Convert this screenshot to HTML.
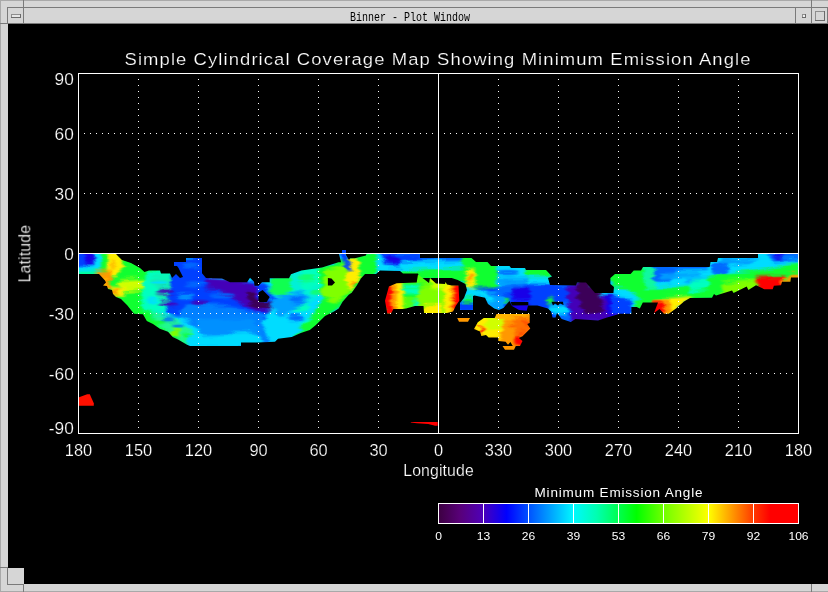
<!DOCTYPE html>
<html><head><meta charset="utf-8"><title>Binner - Plot Window</title>
<style>
html,body{margin:0;padding:0;background:#000;width:828px;height:592px;overflow:hidden}
svg{position:absolute;left:0;top:0;display:block}
text{font-family:"Liberation Sans",sans-serif;fill:#fff}
.hv{stroke:#000;stroke-width:0.2px}
.tt{font-family:"Liberation Mono",monospace;fill:#000}
</style></head><body>
<svg width="828" height="592" viewBox="0 0 828 592">
<rect x="0" y="0" width="828" height="592" fill="#000"/>
<g shape-rendering="crispEdges">
<rect x="0" y="0" width="828" height="24" fill="#d6d6d6"/>
<rect x="0" y="0" width="8" height="592" fill="#d6d6d6"/>
<rect x="0" y="584" width="828" height="8" fill="#d6d6d6"/>
<rect x="0" y="568" width="24" height="24" fill="#d6d6d6"/>
<rect x="0" y="0" width="828" height="1" fill="#a9a9a9"/>
<rect x="0" y="0" width="1" height="592" fill="#a9a9a9"/>
<rect x="0" y="591" width="828" height="1" fill="#a9a9a9"/>
<rect x="7" y="7" width="821" height="1" fill="#7a7a7a"/>
<rect x="0" y="23" width="828" height="1" fill="#7a7a7a"/>
<rect x="7" y="7" width="1" height="17" fill="#7a7a7a"/>
<rect x="23" y="0" width="1" height="24" fill="#7a7a7a"/>
<rect x="795" y="8" width="1" height="15" fill="#7a7a7a"/>
<rect x="811" y="0" width="1" height="24" fill="#7a7a7a"/>
<rect x="827" y="8" width="1" height="15" fill="#7a7a7a"/>
<rect x="8" y="24" width="820" height="560" fill="#000"/>
<rect x="24" y="568" width="804" height="16" fill="#000"/>
<rect x="8" y="568" width="16" height="16" fill="#d6d6d6"/>
<rect x="0" y="567" width="8" height="1" fill="#7a7a7a"/>
<rect x="7" y="568" width="1" height="17" fill="#7a7a7a"/>
<rect x="7" y="584" width="17" height="1" fill="#7a7a7a"/>
<rect x="23" y="584" width="1" height="8" fill="#7a7a7a"/>
<rect x="811" y="584" width="1" height="8" fill="#7a7a7a"/>
<rect x="11" y="14" width="10" height="4" fill="#e6e6e6"/>
<rect x="11" y="14" width="10" height="1" fill="#8e8e8e"/>
<rect x="11" y="14" width="1" height="4" fill="#8e8e8e"/>
<rect x="11" y="17" width="10" height="1" fill="#6a6a6a"/>
<rect x="20" y="14" width="1" height="4" fill="#6a6a6a"/>
<rect x="802" y="14" width="4" height="4" fill="#f0f0f0"/>
<rect x="802" y="14" width="4" height="1" fill="#8e8e8e"/>
<rect x="802" y="14" width="1" height="4" fill="#8e8e8e"/>
<rect x="802" y="17" width="4" height="1" fill="#6a6a6a"/>
<rect x="805" y="14" width="1" height="4" fill="#6a6a6a"/>
<rect x="815" y="11" width="10" height="10" fill="#d6d6d6"/>
<rect x="815" y="11" width="10" height="1" fill="#8e8e8e"/>
<rect x="815" y="11" width="1" height="10" fill="#8e8e8e"/>
<rect x="815" y="20" width="10" height="1" fill="#6a6a6a"/>
<rect x="824" y="11" width="1" height="10" fill="#6a6a6a"/>
</g>
<g opacity="0.999"><text class="tt" x="350" y="21" font-size="10" textLength="120" lengthAdjust="spacing" transform="translate(0,21) scale(1,1.3) translate(0,-21)">Binner - Plot Window</text></g>
<defs>
<clipPath id="c_main">
<polygon points="79,254 116,254 122,260 131,263 140,268 144.5,272 149,270.5 160,270.5 161,273.5 170,273.5 172,278 176,274 180,278 183,277 181,273 178.5,268 177,266 174,266 174,262 186,262 186,258 202,258 202,273.3 206,278 222,278.4 230,282.3 247,282.3 250,277.7 254,281.8 254.5,285.8 258.5,285.8 262,282.3 269.7,282.3 269.7,278.2 289,278.2 291,274.2 301.4,270.4 322,267.4 338.5,262.2 341,262.2 339,254 342,254 342,250 346,250 346,255 349,260 350.2,258.2 354.8,258.2 366,255.6 366.4,254 420,254 420,258 471.5,258 476,262 487.5,262 491,266 509.5,266 511,268 525,268 526,270 546,270 552,276.5 548,278 550,285 576,285.5 577,282.6 586,282.6 595,293 613.4,293 614,287 610.4,284 610.4,278 615,274 630.6,274 633.7,270.4 641,270.4 643,267 709.7,267 710.5,262 717,262 718,258 758,258 758,254 799,254 799,277.5 791,277.5 790.4,281.7 782,281.7 781,285.2 773.9,285.8 772.7,289.3 764.4,289.3 756,285.2 748.4,290 746.7,286.4 733.6,293 732,290.5 716,295.5 714,294 712,297.8 690,298 684,301.6 676,308.4 668.7,313.8 664,313.8 659.5,309 654,313 658,302.4 642.8,302.4 639.8,308.4 636.7,307 631.4,307 631.4,313.8 620,313.8 607,317.6 598,320.6 575.4,319 570.8,322 561.7,319 557,313 555.6,317.6 552.6,317.6 551,311.5 548,308.4 537.4,305.4 528,305.4 526.7,310.7 519,310 512,306 509.5,301 503.4,308 498.9,310 494.3,308.4 488,303.9 485,297.8 474.5,295.5 473,296 473,310 460,310 460,303 464,298 467,290 465.4,284 457.8,280 451.7,278 419.8,278 418,273.5 403,273.5 400,271 380,270.4 376,273.9 365,273.9 360.9,278.5 356.8,285.6 351.7,292.7 348.7,294.7 342.6,301.8 338.7,308.4 334,311.5 325,316 315.9,325 309.8,330 300.8,333 291.7,337 278,338.7 275,341.7 258,342.5 241,342.5 241,346 190,346 187,344.8 178,339.4 172.7,337 168,331.8 159.8,328.8 153,324 146.8,321 143,314.3 134,313.8 127,305 121,299 116,297 113,294 112,290 108,289 107,286 103,285.6 106,282.5 105,280.5 99,274 79,274"/>
</clipPath>
<clipPath id="c_mid">
<polygon points="385,300.8 388.9,286.4 396.5,283.3 416.7,282.6 418,274.5 429,283 430,278 436,283.5 445,284 445.5,282 447,284.5 451.7,285.6 458.5,285.6 459.3,300.8 456,305.4 453,311.5 447,313 424,313 423.5,306 415,306 406,308.4 402.5,309 393.4,309 391,313.8 387.3,313.8"/>
</clipPath>
<clipPath id="c_orange">
<polygon points="496.5,314 529.7,314 529.7,323 527.3,324 530.3,328.4 522.5,336.2 518.8,338 522.5,341 520,346 512.8,346 510.4,342 508,344.7 505.6,341.7 498.3,341 498.3,337.4 488.6,337.4 486,335 481.4,336 480,331.4 474,329 477.8,322.3 483.8,318 494.7,318"/>
<polygon points="502.5,346 515.8,346 514,349.8 505,349.8"/>
<polygon points="457.2,318 470,318 468,321.7 459,321.7"/>
</clipPath>
<filter id="bl" x="-5%" y="-20%" width="110%" height="140%" color-interpolation-filters="sRGB"><feGaussianBlur stdDeviation="1.4" result="b"/><feTurbulence type="fractalNoise" baseFrequency="0.035 0.22" numOctaves="2" seed="7" result="n"/><feDisplacementMap in="b" in2="n" scale="9" xChannelSelector="R" yChannelSelector="G"/></filter>
</defs>
<g clip-path="url(#c_main)"><g filter="url(#bl)">
<rect x="60" y="240" width="760" height="130" fill="#00c8ff"/>
<rect x="70" y="250" width="31" height="26" fill="#0040ff"/>
<polygon points="84,250 95,250 95,265 86,266" fill="#1800e8"/>
<rect x="70" y="266" width="31" height="10" fill="#00dcff"/>
<rect x="94" y="250" width="8" height="26" fill="#00dcff"/>
<rect x="70" y="270.5" width="34" height="7.5" fill="#00ffa0"/>
<rect x="101" y="250" width="10" height="30" fill="#10ff30"/>
<polygon points="110,250 150,262 180,270 178,300 140,318 120,308 104,290" fill="#10ff30"/>
<polygon points="108,250 119,250 125,262 117,277 106,276" fill="#ffee00"/>
<ellipse cx="113" cy="265" rx="2.5" ry="5" fill="#ffc000"/>
<polygon points="96,272 112,271 110,289 100,289" fill="#ff9800"/>
<polygon points="100,278 106,276 106,288 101,288" fill="#ffb800"/>
<polygon points="118,281 158,279 158,287 122,291" fill="#d0ff00"/>
<polygon points="109,287 124,287 124,296 112,296" fill="#ffee00"/>
<ellipse cx="115" cy="292" rx="4" ry="2.5" fill="#ff9800"/>
<polygon points="147,270 175,272 176,300 165,332 144,316 141,296" fill="#00ffc0"/>
<polygon points="150,276 178,276 175,300 160,300" fill="#10f0b0"/>
<ellipse cx="160" cy="283" rx="8" ry="3" fill="#00dcff"/>
<ellipse cx="152" cy="300" rx="6" ry="2.5" fill="#00dcff"/>
<polygon points="170,292 172,258 205,255 210,278 262,282 300,300 300,320 260,350 190,350 176,332 166,312" fill="#0040ff"/>
<polygon points="185,304 230,306 262,314 270,345 190,348 175,325" fill="#0080ff"/>
<polygon points="206,277 243,281 254,285 259,292 258,302 267,302 275,303 280,309 272,313 255,311 240,303 222,293 206,284" fill="#4400b8"/>
<polygon points="246,292 256,294 256,300 268,301 275,305 270,309 256,308 248,302" fill="#3c0058"/>
<ellipse cx="166" cy="292" rx="9" ry="2.5" fill="#4400b8"/>
<ellipse cx="168" cy="304" rx="9" ry="2.5" fill="#4400b8"/>
<ellipse cx="160" cy="316" rx="6" ry="2" fill="#1800e8"/>
<ellipse cx="200" cy="303" rx="9" ry="2.5" fill="#4400b8"/>
<ellipse cx="192" cy="266" rx="8" ry="3" fill="#0068ff"/>
<ellipse cx="196" cy="284" rx="10" ry="2.5" fill="#0068ff"/>
<ellipse cx="222" cy="296" rx="12" ry="2.5" fill="#0068ff"/>
<ellipse cx="186" cy="296" rx="8" ry="2" fill="#00a0ff"/>
<ellipse cx="212" cy="288" rx="8" ry="2" fill="#4400b8"/>
<polygon points="140,310 150,312 172,326 190,338 192,348 140,330" fill="#10ff30"/>
<ellipse cx="175" cy="333" rx="4" ry="4" fill="#80ff00"/>
<polygon points="150,316 185,330 200,346 215,346 190,322 165,312" fill="#00dcff"/>
<polygon points="152,314 172,316 192,332 194,346 180,342 160,328" fill="#20f890"/>
<ellipse cx="175" cy="333" rx="4" ry="4" fill="#80ff00"/>
<ellipse cx="168" cy="319" rx="7" ry="2" fill="#0068ff"/>
<ellipse cx="178" cy="326" rx="6" ry="2" fill="#0068ff"/>
<ellipse cx="160" cy="322" rx="5" ry="2" fill="#10ff30"/>
<ellipse cx="186" cy="336" rx="5" ry="2.5" fill="#10ff30"/>
<polygon points="196,320 250,318 262,330 250,336 200,334" fill="#0090ff"/>
<polygon points="186,336 246,333 262,336 262,348 186,348" fill="#00dcff"/>
<polygon points="262,282 300,268 330,262 330,300 300,336 270,344 262,320 280,300" fill="#00dcff"/>
<ellipse cx="275" cy="286" rx="5" ry="7" fill="#10ff30"/>
<polygon points="283,276 322,266 326,290 300,310 284,300" fill="#00f0d8"/>
<polygon points="300,268 324,266 322,284 304,290" fill="#00ffc0"/>
<polygon points="270,278 290,276 292,290 282,296 272,292" fill="#10ff50"/>
<ellipse cx="306" cy="279" rx="10" ry="3" fill="#10ff70"/>
<ellipse cx="318" cy="292" rx="8" ry="3" fill="#10ff70"/>
<ellipse cx="298" cy="296" rx="8" ry="2" fill="#0068ff"/>
<ellipse cx="300" cy="308" rx="10" ry="4" fill="#00ffc0"/>
<ellipse cx="312" cy="322" rx="9" ry="4" fill="#00ffc0"/>
<polygon points="268,300 300,290 310,300 280,318" fill="#00a0ff"/>
<ellipse cx="297" cy="300" rx="8" ry="3" fill="#0068ff"/>
<ellipse cx="295" cy="318" rx="8" ry="3" fill="#0068ff"/>
<polygon points="318,268 340,260 352,256 380,252 380,274 350,296 330,318 305,338 290,342 306,324 323,300" fill="#10ff30"/>
<polygon points="325,270 350,262 352,290 335,304 322,296" fill="#80ff00"/>
<polygon points="349,258 358,256 360,276 352,292 346,280" fill="#ffee00"/>
<ellipse cx="354" cy="283" rx="3" ry="3" fill="#ff9800"/>
<polygon points="339,253 341.5,249 347,249 348,258 352,271 347,271 344,262" fill="#0040ff"/>
<polygon points="358,252 380,252 380,274 366,276" fill="#10ff30"/>
<rect x="376" y="250" width="94" height="30" fill="#00dcff"/>
<polygon points="380,252 424,252 424,262 410,268 384,266" fill="#0040ff"/>
<ellipse cx="392" cy="260" rx="8" ry="5" fill="#1800e8"/>
<polygon points="420,252 465,252 465,263 420,265" fill="#0068ff"/>
<polygon points="400,269 470,264 470,282 420,280 400,276" fill="#10ff30"/>
<polygon points="400,262 462,261 462,268 400,270" fill="#00dcff"/>
<polygon points="462,254 478,254 496,262 499,288 474,294 462,282" fill="#10ff30"/>
<polygon points="464,270 473,268 476,286 468,290" fill="#ffee00"/>
<ellipse cx="470" cy="279" rx="2" ry="3.5" fill="#ff9800"/>
<polygon points="498,264 525,266 530,285 496,288" fill="#00dcff"/>
<ellipse cx="508" cy="273" rx="12" ry="2.5" fill="#0068ff"/>
<polygon points="496,278 530,278 530,284 500,284" fill="#00a0ff"/>
<polygon points="474,288 530,284 530,312 500,312 486,304" fill="#0040ff"/>
<polygon points="474,292 500,292 506,300 504,312 486,306" fill="#00a0ff"/>
<ellipse cx="489" cy="300" rx="4" ry="3" fill="#00dcff"/>
<ellipse cx="506" cy="301" rx="2" ry="3" fill="#10ff30"/>
<polygon points="474,290 488,291 488,298 474,297" fill="#00dcff"/>
<polygon points="494,286 530,282 530,292 498,296" fill="#0068ff"/>
<polygon points="466,288 474,288 474,298 464,298" fill="#00dcff"/>
<ellipse cx="468" cy="300" rx="5" ry="2.5" fill="#10ff30"/>
<rect x="458" y="302" width="17" height="10" fill="#0040ff"/>
<polygon points="526,268 548,268 554,278 528,282" fill="#10ff30"/>
<polygon points="528,276 552,276 552,288 528,290" fill="#00dcff"/>
<polygon points="524,284 580,284 580,324 540,324 524,312" fill="#0040ff"/>
<polygon points="512,288 530,288 530,299 512,300" fill="#1800e8"/>
<polygon points="508,304 530,304 530,314 508,314" fill="#1800e8"/>
<ellipse cx="550" cy="301" rx="3.5" ry="3.5" fill="#10ff30"/>
<polygon points="548,304 566,300 572,324 552,320" fill="#0068ff"/>
<polygon points="549,305.5 568,305.5 566,314 551,314" fill="#00dcff"/>
<polygon points="566,286 586,282 600,296 624,298 624,322 572,324" fill="#4400b8"/>
<polygon points="578,281 589,281 600,294 604,312 584,312 577,296" fill="#3c0058"/>
<polygon points="606,296 618,294 620,316 608,318" fill="#1800e8"/>
<polygon points="608,272 648,264 652,296 630,300 612,290" fill="#10ff30"/>
<polygon points="643,266 654,266 654,290 646,292" fill="#00f0c0"/>
<polygon points="612,288 628,290 640,298 642,306 626,308 614,300" fill="#00dcff"/>
<polygon points="612,296 632,300 632,316 612,316" fill="#0040ff"/>
<polygon points="650,262 712,262 712,300 652,304" fill="#00dcff"/>
<polygon points="644,264 654,264 656,290 646,294" fill="#10f8a0"/>
<polygon points="653,264 674,264 676,272 670,283 655,282" fill="#0068ff"/>
<polygon points="674,263 714,262 714,269.5 676,270.5" fill="#0068ff"/>
<polygon points="660,274 700,272 700,276 662,279" fill="#00a0ff"/>
<polygon points="684,279 712,277 712,281 686,283" fill="#00a0ff"/>
<polygon points="640,290 712,284 714,300 640,304" fill="#10ff30"/>
<polygon points="634,300 648,298 648,306 636,309" fill="#10ff30"/>
<polygon points="690,280 712,278 712,288 690,292" fill="#00ffc0"/>
<polygon points="652,300 692,296 684,304 670,316 650,316" fill="#ffee00"/>
<polygon points="652,300 672,300 668,316 650,316" fill="#ff9800"/>
<polygon points="652,302 664,302 662,316 650,316" fill="#ff0000"/>
<polygon points="708,256 800,250 800,280 708,282" fill="#00dcff"/>
<polygon points="712,264 730,262 726,274 712,274" fill="#0068ff"/>
<polygon points="720,258 760,258 750,264 722,266" fill="#00a0ff"/>
<polygon points="768,252 800,252 800,260 772,262" fill="#0068ff"/>
<ellipse cx="778" cy="257" rx="4" ry="2.5" fill="#1800e8"/>
<polygon points="708,276 760,270 800,262 800,282 730,300 708,300" fill="#10ff30"/>
<polygon points="722,282 760,278 756,290 724,294" fill="#80ff00"/>
<polygon points="754,277 785,276 783,293 762,293" fill="#ff0000"/>
<polygon points="781,279 792,279 792,284 781,286" fill="#ff9800"/>
<polygon points="789,274 800,274 800,280 789,280" fill="#ff9800"/>
</g></g>
<g clip-path="url(#c_mid)"><g filter="url(#bl)">
<rect x="60" y="240" width="760" height="130" fill="#30ff20"/>
<rect x="383" y="272" width="79" height="44" fill="#50ff10"/>
<polygon points="400,284 424,284 424,298 404,298" fill="#10ff30"/>
<polygon points="402,286 419,286 419,294 404,294" fill="#00ffc0"/>
<ellipse cx="417" cy="303" rx="6" ry="2.5" fill="#00ffc0"/>
<polygon points="420,286 446,284 446,312 424,312 416,300" fill="#80ff00"/>
<polygon points="424,304 442,304 442,316 424,316" fill="#ffee00"/>
<polygon points="428,274 440,280 446,280 446,290 432,288" fill="#d0ff00"/>
<polygon points="395,281 402,281 404,312 395,312" fill="#ffee00"/>
<polygon points="390,282 396.5,282 397,312 390,312" fill="#ff9800"/>
<polygon points="383,282 391,282 392,316 383,316" fill="#ff0000"/>
<polygon points="444.5,281 452,284 452,316 444.5,316" fill="#ffee00"/>
<polygon points="451,284 455.5,284 455.5,316 451,316" fill="#ff9800"/>
<polygon points="454.5,284 463,284 463,310 454.5,316" fill="#ff0000"/>
</g></g>
<g clip-path="url(#c_orange)"><g filter="url(#bl)">
<rect x="60" y="240" width="760" height="130" fill="#ff9800"/>
<polygon points="470,310 534,310 534,352 470,352" fill="#ff9800"/>
<polygon points="472,316 504,316 500,340 476,340" fill="#ffee00"/>
<polygon points="486,318 506,316 500,330 486,330" fill="#d0ff00"/>
<polygon points="512,312 534,312 534,336 516,336" fill="#ff7000"/>
<polygon points="494,310 532,310 532,318 494,319" fill="#ffb400"/>
<ellipse cx="526" cy="323" rx="3" ry="3" fill="#ff5000"/>
<ellipse cx="523" cy="332" rx="3" ry="2.5" fill="#ff5000"/>
<ellipse cx="512" cy="326" rx="3" ry="2.5" fill="#ff6000"/>
<ellipse cx="519" cy="341" rx="5" ry="5" fill="#ff0000"/>
<ellipse cx="481.5" cy="329.5" rx="1.8" ry="3.5" fill="#ff0000"/>
<rect x="500" y="345" width="18" height="6" fill="#ff9800"/>
<rect x="455" y="317" width="17" height="6" fill="#ff9800"/>
</g></g>
<polygon points="258.5,292.4 262.6,289.9 266.1,293.4 269.7,297 266.7,302 258.5,302" fill="#000"/>
<polygon points="327.9,278 331.5,278.5 335,282.5 332,285.6 327.9,285.6" fill="#000"/>
<polygon points="510.6,302 528.3,302 528.3,305.2 512,305.6" fill="#000"/>
<polygon points="551.5,301.8 563,301.8 563.5,305 560,303.5 558,305.5 555,303.5 553,305.5" fill="#000"/>
<polygon points="79,397.2 87.2,394.2 89.8,394.2 93.8,403.3 93.8,405.8 79,405.8" fill="#ff1000"/>
<polygon points="410.8,422 437.7,422 437.7,425.7 435,425.7 428.3,424 416.8,423.3 410.8,422.5" fill="#ff0000"/>
<g shape-rendering="crispEdges" fill="#fff">
<path d="M84 133h1v1h-1zM84 193h1v1h-1zM84 313h1v1h-1zM84 373h1v1h-1zM90 133h1v1h-1zM90 193h1v1h-1zM90 313h1v1h-1zM90 373h1v1h-1zM96 133h1v1h-1zM96 193h1v1h-1zM96 313h1v1h-1zM96 373h1v1h-1zM102 133h1v1h-1zM102 193h1v1h-1zM102 313h1v1h-1zM102 373h1v1h-1zM108 133h1v1h-1zM108 193h1v1h-1zM108 313h1v1h-1zM108 373h1v1h-1zM114 133h1v1h-1zM114 193h1v1h-1zM114 313h1v1h-1zM114 373h1v1h-1zM120 133h1v1h-1zM120 193h1v1h-1zM120 313h1v1h-1zM120 373h1v1h-1zM126 133h1v1h-1zM126 193h1v1h-1zM126 313h1v1h-1zM126 373h1v1h-1zM132 133h1v1h-1zM132 193h1v1h-1zM132 313h1v1h-1zM132 373h1v1h-1zM138 79h1v1h-1zM138 85h1v1h-1zM138 91h1v1h-1zM138 97h1v1h-1zM138 103h1v1h-1zM138 109h1v1h-1zM138 115h1v1h-1zM138 121h1v1h-1zM138 127h1v1h-1zM138 133h1v1h-1zM138 139h1v1h-1zM138 145h1v1h-1zM138 151h1v1h-1zM138 157h1v1h-1zM138 163h1v1h-1zM138 169h1v1h-1zM138 175h1v1h-1zM138 181h1v1h-1zM138 187h1v1h-1zM138 193h1v1h-1zM138 199h1v1h-1zM138 205h1v1h-1zM138 211h1v1h-1zM138 217h1v1h-1zM138 223h1v1h-1zM138 229h1v1h-1zM138 235h1v1h-1zM138 241h1v1h-1zM138 247h1v1h-1zM138 253h1v1h-1zM138 259h1v1h-1zM138 265h1v1h-1zM138 271h1v1h-1zM138 277h1v1h-1zM138 283h1v1h-1zM138 289h1v1h-1zM138 295h1v1h-1zM138 301h1v1h-1zM138 307h1v1h-1zM138 313h1v1h-1zM138 319h1v1h-1zM138 325h1v1h-1zM138 331h1v1h-1zM138 337h1v1h-1zM138 343h1v1h-1zM138 349h1v1h-1zM138 355h1v1h-1zM138 361h1v1h-1zM138 367h1v1h-1zM138 373h1v1h-1zM138 379h1v1h-1zM138 385h1v1h-1zM138 391h1v1h-1zM138 397h1v1h-1zM138 403h1v1h-1zM138 409h1v1h-1zM138 415h1v1h-1zM138 421h1v1h-1zM138 427h1v1h-1zM144 133h1v1h-1zM144 193h1v1h-1zM144 313h1v1h-1zM144 373h1v1h-1zM150 133h1v1h-1zM150 193h1v1h-1zM150 313h1v1h-1zM150 373h1v1h-1zM156 133h1v1h-1zM156 193h1v1h-1zM156 313h1v1h-1zM156 373h1v1h-1zM162 133h1v1h-1zM162 193h1v1h-1zM162 313h1v1h-1zM162 373h1v1h-1zM168 133h1v1h-1zM168 193h1v1h-1zM168 313h1v1h-1zM168 373h1v1h-1zM174 133h1v1h-1zM174 193h1v1h-1zM174 313h1v1h-1zM174 373h1v1h-1zM180 133h1v1h-1zM180 193h1v1h-1zM180 313h1v1h-1zM180 373h1v1h-1zM186 133h1v1h-1zM186 193h1v1h-1zM186 313h1v1h-1zM186 373h1v1h-1zM192 133h1v1h-1zM192 193h1v1h-1zM192 313h1v1h-1zM192 373h1v1h-1zM198 79h1v1h-1zM198 85h1v1h-1zM198 91h1v1h-1zM198 97h1v1h-1zM198 103h1v1h-1zM198 109h1v1h-1zM198 115h1v1h-1zM198 121h1v1h-1zM198 127h1v1h-1zM198 133h1v1h-1zM198 139h1v1h-1zM198 145h1v1h-1zM198 151h1v1h-1zM198 157h1v1h-1zM198 163h1v1h-1zM198 169h1v1h-1zM198 175h1v1h-1zM198 181h1v1h-1zM198 187h1v1h-1zM198 193h1v1h-1zM198 199h1v1h-1zM198 205h1v1h-1zM198 211h1v1h-1zM198 217h1v1h-1zM198 223h1v1h-1zM198 229h1v1h-1zM198 235h1v1h-1zM198 241h1v1h-1zM198 247h1v1h-1zM198 253h1v1h-1zM198 259h1v1h-1zM198 265h1v1h-1zM198 271h1v1h-1zM198 277h1v1h-1zM198 283h1v1h-1zM198 289h1v1h-1zM198 295h1v1h-1zM198 301h1v1h-1zM198 307h1v1h-1zM198 313h1v1h-1zM198 319h1v1h-1zM198 325h1v1h-1zM198 331h1v1h-1zM198 337h1v1h-1zM198 343h1v1h-1zM198 349h1v1h-1zM198 355h1v1h-1zM198 361h1v1h-1zM198 367h1v1h-1zM198 373h1v1h-1zM198 379h1v1h-1zM198 385h1v1h-1zM198 391h1v1h-1zM198 397h1v1h-1zM198 403h1v1h-1zM198 409h1v1h-1zM198 415h1v1h-1zM198 421h1v1h-1zM198 427h1v1h-1zM204 133h1v1h-1zM204 193h1v1h-1zM204 313h1v1h-1zM204 373h1v1h-1zM210 133h1v1h-1zM210 193h1v1h-1zM210 313h1v1h-1zM210 373h1v1h-1zM216 133h1v1h-1zM216 193h1v1h-1zM216 313h1v1h-1zM216 373h1v1h-1zM222 133h1v1h-1zM222 193h1v1h-1zM222 313h1v1h-1zM222 373h1v1h-1zM228 133h1v1h-1zM228 193h1v1h-1zM228 313h1v1h-1zM228 373h1v1h-1zM234 133h1v1h-1zM234 193h1v1h-1zM234 313h1v1h-1zM234 373h1v1h-1zM240 133h1v1h-1zM240 193h1v1h-1zM240 313h1v1h-1zM240 373h1v1h-1zM246 133h1v1h-1zM246 193h1v1h-1zM246 313h1v1h-1zM246 373h1v1h-1zM252 133h1v1h-1zM252 193h1v1h-1zM252 313h1v1h-1zM252 373h1v1h-1zM258 79h1v1h-1zM258 85h1v1h-1zM258 91h1v1h-1zM258 97h1v1h-1zM258 103h1v1h-1zM258 109h1v1h-1zM258 115h1v1h-1zM258 121h1v1h-1zM258 127h1v1h-1zM258 133h1v1h-1zM258 139h1v1h-1zM258 145h1v1h-1zM258 151h1v1h-1zM258 157h1v1h-1zM258 163h1v1h-1zM258 169h1v1h-1zM258 175h1v1h-1zM258 181h1v1h-1zM258 187h1v1h-1zM258 193h1v1h-1zM258 199h1v1h-1zM258 205h1v1h-1zM258 211h1v1h-1zM258 217h1v1h-1zM258 223h1v1h-1zM258 229h1v1h-1zM258 235h1v1h-1zM258 241h1v1h-1zM258 247h1v1h-1zM258 253h1v1h-1zM258 259h1v1h-1zM258 265h1v1h-1zM258 271h1v1h-1zM258 277h1v1h-1zM258 283h1v1h-1zM258 289h1v1h-1zM258 295h1v1h-1zM258 301h1v1h-1zM258 307h1v1h-1zM258 313h1v1h-1zM258 319h1v1h-1zM258 325h1v1h-1zM258 331h1v1h-1zM258 337h1v1h-1zM258 343h1v1h-1zM258 349h1v1h-1zM258 355h1v1h-1zM258 361h1v1h-1zM258 367h1v1h-1zM258 373h1v1h-1zM258 379h1v1h-1zM258 385h1v1h-1zM258 391h1v1h-1zM258 397h1v1h-1zM258 403h1v1h-1zM258 409h1v1h-1zM258 415h1v1h-1zM258 421h1v1h-1zM258 427h1v1h-1zM264 133h1v1h-1zM264 193h1v1h-1zM264 313h1v1h-1zM264 373h1v1h-1zM270 133h1v1h-1zM270 193h1v1h-1zM270 313h1v1h-1zM270 373h1v1h-1zM276 133h1v1h-1zM276 193h1v1h-1zM276 313h1v1h-1zM276 373h1v1h-1zM282 133h1v1h-1zM282 193h1v1h-1zM282 313h1v1h-1zM282 373h1v1h-1zM288 133h1v1h-1zM288 193h1v1h-1zM288 313h1v1h-1zM288 373h1v1h-1zM294 133h1v1h-1zM294 193h1v1h-1zM294 313h1v1h-1zM294 373h1v1h-1zM300 133h1v1h-1zM300 193h1v1h-1zM300 313h1v1h-1zM300 373h1v1h-1zM306 133h1v1h-1zM306 193h1v1h-1zM306 313h1v1h-1zM306 373h1v1h-1zM312 133h1v1h-1zM312 193h1v1h-1zM312 313h1v1h-1zM312 373h1v1h-1zM318 79h1v1h-1zM318 85h1v1h-1zM318 91h1v1h-1zM318 97h1v1h-1zM318 103h1v1h-1zM318 109h1v1h-1zM318 115h1v1h-1zM318 121h1v1h-1zM318 127h1v1h-1zM318 133h1v1h-1zM318 139h1v1h-1zM318 145h1v1h-1zM318 151h1v1h-1zM318 157h1v1h-1zM318 163h1v1h-1zM318 169h1v1h-1zM318 175h1v1h-1zM318 181h1v1h-1zM318 187h1v1h-1zM318 193h1v1h-1zM318 199h1v1h-1zM318 205h1v1h-1zM318 211h1v1h-1zM318 217h1v1h-1zM318 223h1v1h-1zM318 229h1v1h-1zM318 235h1v1h-1zM318 241h1v1h-1zM318 247h1v1h-1zM318 253h1v1h-1zM318 259h1v1h-1zM318 265h1v1h-1zM318 271h1v1h-1zM318 277h1v1h-1zM318 283h1v1h-1zM318 289h1v1h-1zM318 295h1v1h-1zM318 301h1v1h-1zM318 307h1v1h-1zM318 313h1v1h-1zM318 319h1v1h-1zM318 325h1v1h-1zM318 331h1v1h-1zM318 337h1v1h-1zM318 343h1v1h-1zM318 349h1v1h-1zM318 355h1v1h-1zM318 361h1v1h-1zM318 367h1v1h-1zM318 373h1v1h-1zM318 379h1v1h-1zM318 385h1v1h-1zM318 391h1v1h-1zM318 397h1v1h-1zM318 403h1v1h-1zM318 409h1v1h-1zM318 415h1v1h-1zM318 421h1v1h-1zM318 427h1v1h-1zM324 133h1v1h-1zM324 193h1v1h-1zM324 313h1v1h-1zM324 373h1v1h-1zM330 133h1v1h-1zM330 193h1v1h-1zM330 313h1v1h-1zM330 373h1v1h-1zM336 133h1v1h-1zM336 193h1v1h-1zM336 313h1v1h-1zM336 373h1v1h-1zM342 133h1v1h-1zM342 193h1v1h-1zM342 313h1v1h-1zM342 373h1v1h-1zM348 133h1v1h-1zM348 193h1v1h-1zM348 313h1v1h-1zM348 373h1v1h-1zM354 133h1v1h-1zM354 193h1v1h-1zM354 313h1v1h-1zM354 373h1v1h-1zM360 133h1v1h-1zM360 193h1v1h-1zM360 313h1v1h-1zM360 373h1v1h-1zM366 133h1v1h-1zM366 193h1v1h-1zM366 313h1v1h-1zM366 373h1v1h-1zM372 133h1v1h-1zM372 193h1v1h-1zM372 313h1v1h-1zM372 373h1v1h-1zM378 79h1v1h-1zM378 85h1v1h-1zM378 91h1v1h-1zM378 97h1v1h-1zM378 103h1v1h-1zM378 109h1v1h-1zM378 115h1v1h-1zM378 121h1v1h-1zM378 127h1v1h-1zM378 133h1v1h-1zM378 139h1v1h-1zM378 145h1v1h-1zM378 151h1v1h-1zM378 157h1v1h-1zM378 163h1v1h-1zM378 169h1v1h-1zM378 175h1v1h-1zM378 181h1v1h-1zM378 187h1v1h-1zM378 193h1v1h-1zM378 199h1v1h-1zM378 205h1v1h-1zM378 211h1v1h-1zM378 217h1v1h-1zM378 223h1v1h-1zM378 229h1v1h-1zM378 235h1v1h-1zM378 241h1v1h-1zM378 247h1v1h-1zM378 253h1v1h-1zM378 259h1v1h-1zM378 265h1v1h-1zM378 271h1v1h-1zM378 277h1v1h-1zM378 283h1v1h-1zM378 289h1v1h-1zM378 295h1v1h-1zM378 301h1v1h-1zM378 307h1v1h-1zM378 313h1v1h-1zM378 319h1v1h-1zM378 325h1v1h-1zM378 331h1v1h-1zM378 337h1v1h-1zM378 343h1v1h-1zM378 349h1v1h-1zM378 355h1v1h-1zM378 361h1v1h-1zM378 367h1v1h-1zM378 373h1v1h-1zM378 379h1v1h-1zM378 385h1v1h-1zM378 391h1v1h-1zM378 397h1v1h-1zM378 403h1v1h-1zM378 409h1v1h-1zM378 415h1v1h-1zM378 421h1v1h-1zM378 427h1v1h-1zM384 133h1v1h-1zM384 193h1v1h-1zM384 313h1v1h-1zM384 373h1v1h-1zM390 133h1v1h-1zM390 193h1v1h-1zM390 313h1v1h-1zM390 373h1v1h-1zM396 133h1v1h-1zM396 193h1v1h-1zM396 313h1v1h-1zM396 373h1v1h-1zM402 133h1v1h-1zM402 193h1v1h-1zM402 313h1v1h-1zM402 373h1v1h-1zM408 133h1v1h-1zM408 193h1v1h-1zM408 313h1v1h-1zM408 373h1v1h-1zM414 133h1v1h-1zM414 193h1v1h-1zM414 313h1v1h-1zM414 373h1v1h-1zM420 133h1v1h-1zM420 193h1v1h-1zM420 313h1v1h-1zM420 373h1v1h-1zM426 133h1v1h-1zM426 193h1v1h-1zM426 313h1v1h-1zM426 373h1v1h-1zM432 133h1v1h-1zM432 193h1v1h-1zM432 313h1v1h-1zM432 373h1v1h-1zM438 133h1v1h-1zM438 193h1v1h-1zM438 313h1v1h-1zM438 373h1v1h-1zM444 133h1v1h-1zM444 193h1v1h-1zM444 313h1v1h-1zM444 373h1v1h-1zM450 133h1v1h-1zM450 193h1v1h-1zM450 313h1v1h-1zM450 373h1v1h-1zM456 133h1v1h-1zM456 193h1v1h-1zM456 313h1v1h-1zM456 373h1v1h-1zM462 133h1v1h-1zM462 193h1v1h-1zM462 313h1v1h-1zM462 373h1v1h-1zM468 133h1v1h-1zM468 193h1v1h-1zM468 313h1v1h-1zM468 373h1v1h-1zM474 133h1v1h-1zM474 193h1v1h-1zM474 313h1v1h-1zM474 373h1v1h-1zM480 133h1v1h-1zM480 193h1v1h-1zM480 313h1v1h-1zM480 373h1v1h-1zM486 133h1v1h-1zM486 193h1v1h-1zM486 313h1v1h-1zM486 373h1v1h-1zM492 133h1v1h-1zM492 193h1v1h-1zM492 313h1v1h-1zM492 373h1v1h-1zM498 79h1v1h-1zM498 85h1v1h-1zM498 91h1v1h-1zM498 97h1v1h-1zM498 103h1v1h-1zM498 109h1v1h-1zM498 115h1v1h-1zM498 121h1v1h-1zM498 127h1v1h-1zM498 133h1v1h-1zM498 139h1v1h-1zM498 145h1v1h-1zM498 151h1v1h-1zM498 157h1v1h-1zM498 163h1v1h-1zM498 169h1v1h-1zM498 175h1v1h-1zM498 181h1v1h-1zM498 187h1v1h-1zM498 193h1v1h-1zM498 199h1v1h-1zM498 205h1v1h-1zM498 211h1v1h-1zM498 217h1v1h-1zM498 223h1v1h-1zM498 229h1v1h-1zM498 235h1v1h-1zM498 241h1v1h-1zM498 247h1v1h-1zM498 253h1v1h-1zM498 259h1v1h-1zM498 265h1v1h-1zM498 271h1v1h-1zM498 277h1v1h-1zM498 283h1v1h-1zM498 289h1v1h-1zM498 295h1v1h-1zM498 301h1v1h-1zM498 307h1v1h-1zM498 313h1v1h-1zM498 319h1v1h-1zM498 325h1v1h-1zM498 331h1v1h-1zM498 337h1v1h-1zM498 343h1v1h-1zM498 349h1v1h-1zM498 355h1v1h-1zM498 361h1v1h-1zM498 367h1v1h-1zM498 373h1v1h-1zM498 379h1v1h-1zM498 385h1v1h-1zM498 391h1v1h-1zM498 397h1v1h-1zM498 403h1v1h-1zM498 409h1v1h-1zM498 415h1v1h-1zM498 421h1v1h-1zM498 427h1v1h-1zM504 133h1v1h-1zM504 193h1v1h-1zM504 313h1v1h-1zM504 373h1v1h-1zM510 133h1v1h-1zM510 193h1v1h-1zM510 313h1v1h-1zM510 373h1v1h-1zM516 133h1v1h-1zM516 193h1v1h-1zM516 313h1v1h-1zM516 373h1v1h-1zM522 133h1v1h-1zM522 193h1v1h-1zM522 313h1v1h-1zM522 373h1v1h-1zM528 133h1v1h-1zM528 193h1v1h-1zM528 313h1v1h-1zM528 373h1v1h-1zM534 133h1v1h-1zM534 193h1v1h-1zM534 313h1v1h-1zM534 373h1v1h-1zM540 133h1v1h-1zM540 193h1v1h-1zM540 313h1v1h-1zM540 373h1v1h-1zM546 133h1v1h-1zM546 193h1v1h-1zM546 313h1v1h-1zM546 373h1v1h-1zM552 133h1v1h-1zM552 193h1v1h-1zM552 313h1v1h-1zM552 373h1v1h-1zM558 79h1v1h-1zM558 85h1v1h-1zM558 91h1v1h-1zM558 97h1v1h-1zM558 103h1v1h-1zM558 109h1v1h-1zM558 115h1v1h-1zM558 121h1v1h-1zM558 127h1v1h-1zM558 133h1v1h-1zM558 139h1v1h-1zM558 145h1v1h-1zM558 151h1v1h-1zM558 157h1v1h-1zM558 163h1v1h-1zM558 169h1v1h-1zM558 175h1v1h-1zM558 181h1v1h-1zM558 187h1v1h-1zM558 193h1v1h-1zM558 199h1v1h-1zM558 205h1v1h-1zM558 211h1v1h-1zM558 217h1v1h-1zM558 223h1v1h-1zM558 229h1v1h-1zM558 235h1v1h-1zM558 241h1v1h-1zM558 247h1v1h-1zM558 253h1v1h-1zM558 259h1v1h-1zM558 265h1v1h-1zM558 271h1v1h-1zM558 277h1v1h-1zM558 283h1v1h-1zM558 289h1v1h-1zM558 295h1v1h-1zM558 301h1v1h-1zM558 307h1v1h-1zM558 313h1v1h-1zM558 319h1v1h-1zM558 325h1v1h-1zM558 331h1v1h-1zM558 337h1v1h-1zM558 343h1v1h-1zM558 349h1v1h-1zM558 355h1v1h-1zM558 361h1v1h-1zM558 367h1v1h-1zM558 373h1v1h-1zM558 379h1v1h-1zM558 385h1v1h-1zM558 391h1v1h-1zM558 397h1v1h-1zM558 403h1v1h-1zM558 409h1v1h-1zM558 415h1v1h-1zM558 421h1v1h-1zM558 427h1v1h-1zM564 133h1v1h-1zM564 193h1v1h-1zM564 313h1v1h-1zM564 373h1v1h-1zM570 133h1v1h-1zM570 193h1v1h-1zM570 313h1v1h-1zM570 373h1v1h-1zM576 133h1v1h-1zM576 193h1v1h-1zM576 313h1v1h-1zM576 373h1v1h-1zM582 133h1v1h-1zM582 193h1v1h-1zM582 313h1v1h-1zM582 373h1v1h-1zM588 133h1v1h-1zM588 193h1v1h-1zM588 313h1v1h-1zM588 373h1v1h-1zM594 133h1v1h-1zM594 193h1v1h-1zM594 313h1v1h-1zM594 373h1v1h-1zM600 133h1v1h-1zM600 193h1v1h-1zM600 313h1v1h-1zM600 373h1v1h-1zM606 133h1v1h-1zM606 193h1v1h-1zM606 313h1v1h-1zM606 373h1v1h-1zM612 133h1v1h-1zM612 193h1v1h-1zM612 313h1v1h-1zM612 373h1v1h-1zM618 79h1v1h-1zM618 85h1v1h-1zM618 91h1v1h-1zM618 97h1v1h-1zM618 103h1v1h-1zM618 109h1v1h-1zM618 115h1v1h-1zM618 121h1v1h-1zM618 127h1v1h-1zM618 133h1v1h-1zM618 139h1v1h-1zM618 145h1v1h-1zM618 151h1v1h-1zM618 157h1v1h-1zM618 163h1v1h-1zM618 169h1v1h-1zM618 175h1v1h-1zM618 181h1v1h-1zM618 187h1v1h-1zM618 193h1v1h-1zM618 199h1v1h-1zM618 205h1v1h-1zM618 211h1v1h-1zM618 217h1v1h-1zM618 223h1v1h-1zM618 229h1v1h-1zM618 235h1v1h-1zM618 241h1v1h-1zM618 247h1v1h-1zM618 253h1v1h-1zM618 259h1v1h-1zM618 265h1v1h-1zM618 271h1v1h-1zM618 277h1v1h-1zM618 283h1v1h-1zM618 289h1v1h-1zM618 295h1v1h-1zM618 301h1v1h-1zM618 307h1v1h-1zM618 313h1v1h-1zM618 319h1v1h-1zM618 325h1v1h-1zM618 331h1v1h-1zM618 337h1v1h-1zM618 343h1v1h-1zM618 349h1v1h-1zM618 355h1v1h-1zM618 361h1v1h-1zM618 367h1v1h-1zM618 373h1v1h-1zM618 379h1v1h-1zM618 385h1v1h-1zM618 391h1v1h-1zM618 397h1v1h-1zM618 403h1v1h-1zM618 409h1v1h-1zM618 415h1v1h-1zM618 421h1v1h-1zM618 427h1v1h-1zM624 133h1v1h-1zM624 193h1v1h-1zM624 313h1v1h-1zM624 373h1v1h-1zM630 133h1v1h-1zM630 193h1v1h-1zM630 313h1v1h-1zM630 373h1v1h-1zM636 133h1v1h-1zM636 193h1v1h-1zM636 313h1v1h-1zM636 373h1v1h-1zM642 133h1v1h-1zM642 193h1v1h-1zM642 313h1v1h-1zM642 373h1v1h-1zM648 133h1v1h-1zM648 193h1v1h-1zM648 313h1v1h-1zM648 373h1v1h-1zM654 133h1v1h-1zM654 193h1v1h-1zM654 313h1v1h-1zM654 373h1v1h-1zM660 133h1v1h-1zM660 193h1v1h-1zM660 313h1v1h-1zM660 373h1v1h-1zM666 133h1v1h-1zM666 193h1v1h-1zM666 313h1v1h-1zM666 373h1v1h-1zM672 133h1v1h-1zM672 193h1v1h-1zM672 313h1v1h-1zM672 373h1v1h-1zM678 79h1v1h-1zM678 85h1v1h-1zM678 91h1v1h-1zM678 97h1v1h-1zM678 103h1v1h-1zM678 109h1v1h-1zM678 115h1v1h-1zM678 121h1v1h-1zM678 127h1v1h-1zM678 133h1v1h-1zM678 139h1v1h-1zM678 145h1v1h-1zM678 151h1v1h-1zM678 157h1v1h-1zM678 163h1v1h-1zM678 169h1v1h-1zM678 175h1v1h-1zM678 181h1v1h-1zM678 187h1v1h-1zM678 193h1v1h-1zM678 199h1v1h-1zM678 205h1v1h-1zM678 211h1v1h-1zM678 217h1v1h-1zM678 223h1v1h-1zM678 229h1v1h-1zM678 235h1v1h-1zM678 241h1v1h-1zM678 247h1v1h-1zM678 253h1v1h-1zM678 259h1v1h-1zM678 265h1v1h-1zM678 271h1v1h-1zM678 277h1v1h-1zM678 283h1v1h-1zM678 289h1v1h-1zM678 295h1v1h-1zM678 301h1v1h-1zM678 307h1v1h-1zM678 313h1v1h-1zM678 319h1v1h-1zM678 325h1v1h-1zM678 331h1v1h-1zM678 337h1v1h-1zM678 343h1v1h-1zM678 349h1v1h-1zM678 355h1v1h-1zM678 361h1v1h-1zM678 367h1v1h-1zM678 373h1v1h-1zM678 379h1v1h-1zM678 385h1v1h-1zM678 391h1v1h-1zM678 397h1v1h-1zM678 403h1v1h-1zM678 409h1v1h-1zM678 415h1v1h-1zM678 421h1v1h-1zM678 427h1v1h-1zM684 133h1v1h-1zM684 193h1v1h-1zM684 313h1v1h-1zM684 373h1v1h-1zM690 133h1v1h-1zM690 193h1v1h-1zM690 313h1v1h-1zM690 373h1v1h-1zM696 133h1v1h-1zM696 193h1v1h-1zM696 313h1v1h-1zM696 373h1v1h-1zM702 133h1v1h-1zM702 193h1v1h-1zM702 313h1v1h-1zM702 373h1v1h-1zM708 133h1v1h-1zM708 193h1v1h-1zM708 313h1v1h-1zM708 373h1v1h-1zM714 133h1v1h-1zM714 193h1v1h-1zM714 313h1v1h-1zM714 373h1v1h-1zM720 133h1v1h-1zM720 193h1v1h-1zM720 313h1v1h-1zM720 373h1v1h-1zM726 133h1v1h-1zM726 193h1v1h-1zM726 313h1v1h-1zM726 373h1v1h-1zM732 133h1v1h-1zM732 193h1v1h-1zM732 313h1v1h-1zM732 373h1v1h-1zM738 79h1v1h-1zM738 85h1v1h-1zM738 91h1v1h-1zM738 97h1v1h-1zM738 103h1v1h-1zM738 109h1v1h-1zM738 115h1v1h-1zM738 121h1v1h-1zM738 127h1v1h-1zM738 133h1v1h-1zM738 139h1v1h-1zM738 145h1v1h-1zM738 151h1v1h-1zM738 157h1v1h-1zM738 163h1v1h-1zM738 169h1v1h-1zM738 175h1v1h-1zM738 181h1v1h-1zM738 187h1v1h-1zM738 193h1v1h-1zM738 199h1v1h-1zM738 205h1v1h-1zM738 211h1v1h-1zM738 217h1v1h-1zM738 223h1v1h-1zM738 229h1v1h-1zM738 235h1v1h-1zM738 241h1v1h-1zM738 247h1v1h-1zM738 253h1v1h-1zM738 259h1v1h-1zM738 265h1v1h-1zM738 271h1v1h-1zM738 277h1v1h-1zM738 283h1v1h-1zM738 289h1v1h-1zM738 295h1v1h-1zM738 301h1v1h-1zM738 307h1v1h-1zM738 313h1v1h-1zM738 319h1v1h-1zM738 325h1v1h-1zM738 331h1v1h-1zM738 337h1v1h-1zM738 343h1v1h-1zM738 349h1v1h-1zM738 355h1v1h-1zM738 361h1v1h-1zM738 367h1v1h-1zM738 373h1v1h-1zM738 379h1v1h-1zM738 385h1v1h-1zM738 391h1v1h-1zM738 397h1v1h-1zM738 403h1v1h-1zM738 409h1v1h-1zM738 415h1v1h-1zM738 421h1v1h-1zM738 427h1v1h-1zM744 133h1v1h-1zM744 193h1v1h-1zM744 313h1v1h-1zM744 373h1v1h-1zM750 133h1v1h-1zM750 193h1v1h-1zM750 313h1v1h-1zM750 373h1v1h-1zM756 133h1v1h-1zM756 193h1v1h-1zM756 313h1v1h-1zM756 373h1v1h-1zM762 133h1v1h-1zM762 193h1v1h-1zM762 313h1v1h-1zM762 373h1v1h-1zM768 133h1v1h-1zM768 193h1v1h-1zM768 313h1v1h-1zM768 373h1v1h-1zM774 133h1v1h-1zM774 193h1v1h-1zM774 313h1v1h-1zM774 373h1v1h-1zM780 133h1v1h-1zM780 193h1v1h-1zM780 313h1v1h-1zM780 373h1v1h-1zM786 133h1v1h-1zM786 193h1v1h-1zM786 313h1v1h-1zM786 373h1v1h-1zM792 133h1v1h-1zM792 193h1v1h-1zM792 313h1v1h-1zM792 373h1v1h-1z"/>
<rect x="78" y="73" width="721" height="1"/>
<rect x="78" y="433" width="721" height="1"/>
<rect x="78" y="73" width="1" height="361"/>
<rect x="798" y="73" width="1" height="361"/>
<rect x="438" y="73" width="1" height="361"/>
<rect x="78" y="253" width="721" height="1"/>
</g>
<g opacity="0.999">
<text class="hv" font-size="17.4" text-anchor="middle" transform="translate(437.5,65) scale(1.06,1)" textLength="590.57" lengthAdjust="spacing">Simple Cylindrical Coverage Map Showing Minimum Emission Angle</text>
<text class="hv" font-size="15.6" text-anchor="middle" transform="translate(78.5,456) scale(1.05,1)">180</text>
<text class="hv" font-size="15.6" text-anchor="middle" transform="translate(138.5,456) scale(1.05,1)">150</text>
<text class="hv" font-size="15.6" text-anchor="middle" transform="translate(198.5,456) scale(1.05,1)">120</text>
<text class="hv" font-size="15.6" text-anchor="middle" transform="translate(258.5,456) scale(1.05,1)">90</text>
<text class="hv" font-size="15.6" text-anchor="middle" transform="translate(318.5,456) scale(1.05,1)">60</text>
<text class="hv" font-size="15.6" text-anchor="middle" transform="translate(378.5,456) scale(1.05,1)">30</text>
<text class="hv" font-size="15.6" text-anchor="middle" transform="translate(438.5,456) scale(1.05,1)">0</text>
<text class="hv" font-size="15.6" text-anchor="middle" transform="translate(498.5,456) scale(1.05,1)">330</text>
<text class="hv" font-size="15.6" text-anchor="middle" transform="translate(558.5,456) scale(1.05,1)">300</text>
<text class="hv" font-size="15.6" text-anchor="middle" transform="translate(618.5,456) scale(1.05,1)">270</text>
<text class="hv" font-size="15.6" text-anchor="middle" transform="translate(678.5,456) scale(1.05,1)">240</text>
<text class="hv" font-size="15.6" text-anchor="middle" transform="translate(738.5,456) scale(1.05,1)">210</text>
<text class="hv" font-size="15.6" text-anchor="middle" transform="translate(798.5,456) scale(1.05,1)">180</text>
<text class="hv" font-size="16" text-anchor="end" transform="translate(73.8,85.2) scale(1.08,1)">90</text>
<text class="hv" font-size="16" text-anchor="end" transform="translate(73.8,140) scale(1.08,1)">60</text>
<text class="hv" font-size="16" text-anchor="end" transform="translate(73.8,200) scale(1.08,1)">30</text>
<text class="hv" font-size="16" text-anchor="end" transform="translate(73.8,260) scale(1.08,1)">0</text>
<text class="hv" font-size="16" text-anchor="end" transform="translate(73.8,320) scale(1.08,1)">-30</text>
<text class="hv" font-size="16" text-anchor="end" transform="translate(73.8,380) scale(1.08,1)">-60</text>
<text class="hv" font-size="16" text-anchor="end" transform="translate(73.8,434) scale(1.08,1)">-90</text>
<text class="hv" font-size="15.8" text-anchor="middle" transform="translate(438.5,476) scale(1.0,1)" textLength="70.50" lengthAdjust="spacing">Longitude</text>
<text class="hv" font-size="16.5" text-anchor="middle" transform="translate(30.3,253.8) rotate(-90) scale(0.95,1)" textLength="60.53" lengthAdjust="spacing">Latitude</text>
<text class="sm" font-size="13" text-anchor="middle" transform="translate(618.5,497) scale(1.04,1)" textLength="161.54" lengthAdjust="spacing">Minimum Emission Angle</text>
<text class="sm" font-size="11" text-anchor="middle" transform="translate(438.5,540) scale(1.1,1)">0</text>
<text class="sm" font-size="11" text-anchor="middle" transform="translate(483.5,540) scale(1.1,1)">13</text>
<text class="sm" font-size="11" text-anchor="middle" transform="translate(528.5,540) scale(1.1,1)">26</text>
<text class="sm" font-size="11" text-anchor="middle" transform="translate(573.5,540) scale(1.1,1)">39</text>
<text class="sm" font-size="11" text-anchor="middle" transform="translate(618.5,540) scale(1.1,1)">53</text>
<text class="sm" font-size="11" text-anchor="middle" transform="translate(663.5,540) scale(1.1,1)">66</text>
<text class="sm" font-size="11" text-anchor="middle" transform="translate(708.5,540) scale(1.1,1)">79</text>
<text class="sm" font-size="11" text-anchor="middle" transform="translate(753.5,540) scale(1.1,1)">92</text>
<text class="sm" font-size="11" text-anchor="middle" transform="translate(798.5,540) scale(1.1,1)">106</text>
</g>
<defs><linearGradient id="cb" x1="0" x2="1" y1="0" y2="0"><stop offset="0" stop-color="#3c0040"/><stop offset="0.06" stop-color="#580078"/><stop offset="0.12" stop-color="#5000b4"/><stop offset="0.19" stop-color="#0000ff"/><stop offset="0.25" stop-color="#0050ff"/><stop offset="0.31" stop-color="#00a0ff"/><stop offset="0.375" stop-color="#00f8ff"/><stop offset="0.44" stop-color="#00ffb0"/><stop offset="0.5" stop-color="#00ff50"/><stop offset="0.55" stop-color="#00ff00"/><stop offset="0.625" stop-color="#70ff00"/><stop offset="0.75" stop-color="#ffff00"/><stop offset="0.81" stop-color="#ffa000"/><stop offset="0.875" stop-color="#ff3800"/><stop offset="0.92" stop-color="#ff0000"/><stop offset="1" stop-color="#ff0000"/></linearGradient></defs>
<rect x="438" y="503" width="361" height="21" fill="url(#cb)"/>
<g shape-rendering="crispEdges" fill="#fff">
<rect x="438" y="503" width="361" height="1"/><rect x="438" y="523" width="361" height="1"/>
<rect x="438" y="503" width="1" height="21"/>
<rect x="483" y="503" width="1" height="21"/>
<rect x="528" y="503" width="1" height="21"/>
<rect x="573" y="503" width="1" height="21"/>
<rect x="618" y="503" width="1" height="21"/>
<rect x="663" y="503" width="1" height="21"/>
<rect x="708" y="503" width="1" height="21"/>
<rect x="753" y="503" width="1" height="21"/>
<rect x="798" y="503" width="1" height="21"/>
</g>
</svg>
</body></html>
